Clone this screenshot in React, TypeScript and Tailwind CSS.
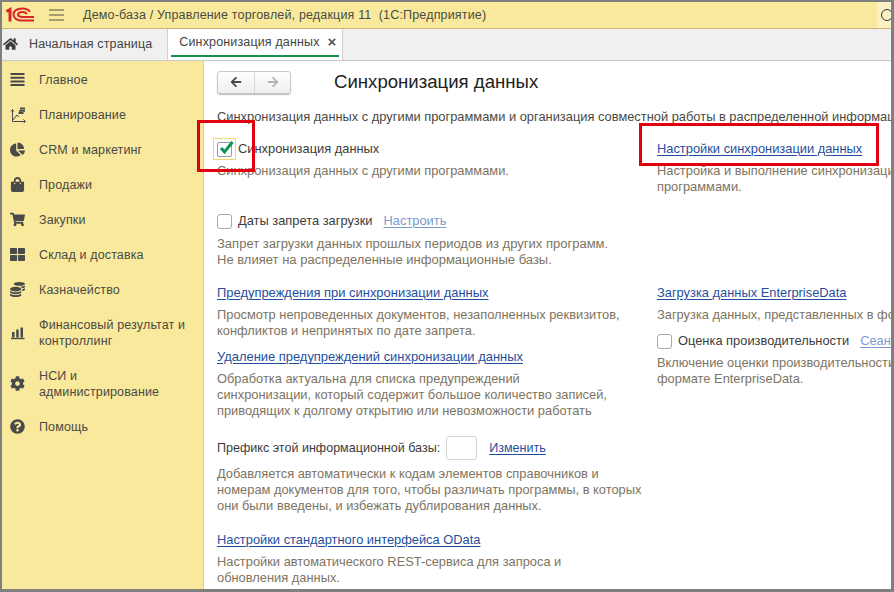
import React from "react";
import { FaHome, FaChartPie, FaShoppingBag, FaShoppingCart, FaThLarge, FaCoins, FaCog, FaQuestionCircle, FaArrowLeft, FaArrowRight } from "react-icons/fa";

const ic = "w-[15px] h-[15px] text-[#4a4a48]";

function Bars() {
  return (
    <svg viewBox="0 0 15 15" className={ic}>
      <path d="M0.5 2h14M0.5 5.7h14M0.5 9.4h14M0.5 13h14" stroke="currentColor" strokeWidth="2" />
    </svg>
  );
}
function Plan() {
  return (
    <svg viewBox="0 0 16 16" className="w-[16px] h-[16px] text-[#4a4a48]" fill="none" stroke="currentColor">
      <path d="M2.5 3v11.5H15M1 4.5l1.5-2 1.5 2M13.5 12.5l2 2-2 1.5M3 13l4-5 2 2" strokeWidth="1" />
      <path d="M8.5 6h5M9 3.8h6M10 1.5h5" strokeWidth="1.8" />
    </svg>
  );
}
function ChartBars() {
  return (
    <svg viewBox="0 0 15 15" className={ic}>
      <path d="M1 13.5h13.5" stroke="currentColor" strokeWidth="1.4" />
      <path d="M2 7h2.5v5.5H2zM6.2 4.5h2.5v8H6.2zM10.5 2.5H13v10h-2.5z" fill="currentColor" />
    </svg>
  );
}

const items: { icon: React.ReactNode; label: React.ReactNode; two?: boolean }[] = [
  { icon: <Bars />, label: "Главное" },
  { icon: <Plan />, label: "Планирование" },
  { icon: <FaChartPie className={ic} />, label: "CRM и маркетинг" },
  { icon: <FaShoppingBag className={ic} />, label: "Продажи" },
  { icon: <FaShoppingCart className={ic} />, label: "Закупки" },
  { icon: <FaThLarge className={ic} />, label: "Склад и доставка" },
  { icon: <FaCoins className={ic} />, label: "Казначейство" },
  { icon: <ChartBars />, label: "Финансовый результат и контроллинг", two: true },
  { icon: <FaCog className={ic} />, label: "НСИ и администрирование", two: true },
  { icon: <FaQuestionCircle className={ic} />, label: "Помощь" },
];

function Link({ children }: { children: React.ReactNode }) {
  return <a className="text-[#1f4f9c] underline underline-offset-2 decoration-1">{children}</a>;
}
function Hint({ className = "", children }: { className?: string; children: React.ReactNode }) {
  return <div className={"text-[#7d7462] " + className}>{children}</div>;
}
function Check() {
  return <span className="inline-block w-[15px] h-[15px] shrink-0 rounded-[3px] border border-[#a8a8a8] bg-white" />;
}

export default function App() {
  return (
    <div
      className="relative w-[894px] h-[592px] overflow-hidden flex flex-col bg-white border-t-2 border-l-2 border-r-[3px] border-b-[3px] border-[#7f7f7f] text-[12.87px] leading-[16px] text-[#3c3c3c]"
      style={{ fontFamily: '"Liberation Sans", Arial, sans-serif' }}
    >
      {/* title bar */}
      <div className="h-[27px] shrink-0 flex items-center bg-[#f9e99c] border-b border-[#c5b579] text-[12.5px]">
        <svg viewBox="0 0 30 16" className="ml-[3px] w-[30px] h-[16px]" fill="none" stroke="#d8262c">
          <path d="M1.5 4.5L5 2.5V14.5" strokeWidth="3" />
          <path d="M25 4.8C23.5 2.6 20.5 1.5 17 1.5C12 1.5 8.5 4 8.5 7.5S12 13.5 17 13.5H29" strokeWidth="2" />
          <path d="M22 7C21 5.6 19.5 5 17.5 5C15 5 13 6 13 7.6S15 10 17.5 10H29" strokeWidth="2" />
        </svg>
        <svg viewBox="0 0 15 12" className="ml-[14px] w-[15px] h-[12px]" stroke="#55524a">
          <path d="M0 1h15M0 6h15M0 11h15" strokeWidth="1" />
        </svg>
        <span className="ml-[19px] text-[#4a4a44] tracking-[0.17px]">Демо-база / Управление торговлей, редакция 11&nbsp; (1С:Предприятие)</span>
        <div className="ml-auto self-stretch w-[14px] bg-[#fbf1c4] flex items-center overflow-hidden">
          <svg viewBox="0 0 14 14" className="ml-[3px] w-[14px] h-[14px] shrink-0" fill="none" stroke="#333">
            <circle cx="7" cy="7" r="5.5" />
          </svg>
        </div>
      </div>

      {/* tabs */}
      <div className="h-[32px] shrink-0 flex items-stretch bg-[#f0f0f0] border-b border-[#c9c9c9] text-[12.5px]">
        <FaHome className="ml-[1px] mt-[8px] w-[15px] h-[14px] text-[#3f3f3f]" />
        <span className="ml-[11px] mt-[7px] text-[#444] tracking-[0.13px]">Начальная страница</span>
        <div className="ml-[15px] w-[176px] bg-white border-x border-[#cfcfcf] flex flex-col px-[3px]">
          <div className="flex-1 flex items-center pl-[8px] pr-[3px] justify-between text-[#444] tracking-[0.15px]">
            <span>Синхронизация данных</span>
            <span className="font-bold text-[15px] text-[#555]">×</span>
          </div>
          <div className="h-[2px] bg-[#149050] mb-[3px]" />
        </div>
      </div>

      <div className="flex-1 flex min-h-0">
        {/* sidebar */}
        <div className="w-[202px] shrink-0 pt-[1px] bg-[#f9e99c] border-r border-[#dccb86] text-[#4a4a44] text-[12.5px] tracking-[0.14px]">
          {items.map((it, i) => (
            <div key={i} className={"flex items-center " + (it.two ? "h-[51px]" : "h-[35px]")}>
              <span className="w-[37px] pl-[8px] shrink-0 flex">{it.icon}</span>
              <span className="w-[155px]">{it.label}</span>
            </div>
          ))}
        </div>

        {/* main */}
        <div className="flex-1 min-w-0 overflow-hidden pl-[13px] pt-[9px]">
          <div className="flex items-center h-[24px]">
            <div className="flex w-[74px] h-[23px] rounded-[3px] border border-[#c8c8c8] bg-gradient-to-b from-white to-[#eeeeee] shadow-[0_1px_1px_#bbb]">
              <div className="w-[37px] flex items-center justify-center border-r border-[#d8d8d8]">
                <FaArrowLeft className="w-[14px] h-[12px] text-[#4a4a4a]" />
              </div>
              <div className="flex-1 flex items-center justify-center">
                <FaArrowRight className="w-[14px] h-[12px] text-[#b4b4b4]" />
              </div>
            </div>
            <h1 className="ml-[43px] text-[18.6px] leading-[24px] text-[#222] whitespace-nowrap">Синхронизация данных</h1>
          </div>

          <div className="mt-[15px] whitespace-nowrap text-[#4a4a44]">
            Синхронизация данных с другими программами и организация совместной работы в распределенной информационной базе
          </div>

          <div className="mt-[16px] flex">
            {/* column 1 */}
            <div className="w-[440px] shrink-0">
              <div className="flex items-center h-[16px]">
                <span className="flex items-center justify-center w-[23px] h-[22px] -ml-[4px] mr-[2px] border border-[#eed96a] shrink-0">
                  <span className="relative w-[15px] h-[15px] rounded-[2px] border border-[#9a9a9a] bg-white">
                    <svg viewBox="0 0 16 16" className="absolute -top-[3px] left-[1px] w-[16px] h-[16px]" fill="none" stroke="#0f9457" strokeWidth="3">
                      <path d="M2 8l3.5 4L13.5 2" />
                    </svg>
                  </span>
                </span>
                <span className="whitespace-nowrap">Синхронизация данных</span>
              </div>
              <Hint className="mt-[6px]">Синхронизация данных с другими программами.</Hint>

              <div className="mt-[34px] flex items-center h-[16px]">
                <Check />
                <span className="ml-[6px]">Даты запрета загрузки</span>
                <span className="ml-[11px] text-[#7b9bd0] underline underline-offset-2 decoration-1">Настроить</span>
              </div>
              <Hint className="mt-[7px] text-[13.03px]">
                Запрет загрузки данных прошлых периодов из других программ.
                <br />
                Не влияет на распределенные информационные базы.
              </Hint>

              <div className="mt-[17px] text-[12.95px]"><Link>Предупреждения при синхронизации данных</Link></div>
              <Hint className="mt-[6px]">
                Просмотр непроведенных документов, незаполненных реквизитов,
                <br />
                конфликтов и непринятых по дате запрета.
              </Hint>

              <div className="mt-[10px] text-[12.93px]"><Link>Удаление предупреждений синхронизации данных</Link></div>
              <Hint className="mt-[6px]">
                Обработка актуальна для списка предупреждений
                <br />
                синхронизации, который содержит большое количество записей,
                <br />
                приводящих к долгому открытию или невозможности работать
              </Hint>

              <div className="mt-[17px] flex items-center h-[24px]">
                <span className="text-[12.55px]">Префикс этой информационной базы:</span>
                <span className="ml-[6px] w-[31px] h-[24px] rounded-[3px] border border-[#d4d4d4] bg-white" />
                <span className="ml-[12px] text-[12.55px]"><Link>Изменить</Link></span>
              </div>
              <Hint className="mt-[6px]">
                Добавляется автоматически к кодам элементов справочников и
                <br />
                номерам документов для того, чтобы различать программы, в которых
                <br />
                они были введены, и избежать дублирования данных.
              </Hint>

              <div className="mt-[18px]"><Link>Настройки стандартного интерфейса OData</Link></div>
              <Hint className="mt-[6px]">
                Настройки автоматического REST-сервиса для запроса и
                <br />
                обновления данных.
              </Hint>
            </div>

            {/* column 2 */}
            <div className="whitespace-nowrap">
              <div><Link>Настройки синхронизации данных</Link></div>
              <Hint className="mt-[6px]">
                Настройка и выполнение синхронизации данных с другими
                <br />
                программами.
              </Hint>
              <div className="mt-[90px]"><Link>Загрузка данных EnterpriseData</Link></div>
              <Hint className="mt-[6px]">Загрузка данных, представленных в формате EnterpriseData</Hint>
              <div className="mt-[10px] flex items-center h-[16px]">
                <Check />
                <span className="ml-[6px]">Оценка производительности</span>
                <span className="ml-[11px] text-[#7b9bd0] underline underline-offset-2 decoration-1">Сеансы</span>
              </div>
              <Hint className="mt-[6px]">
                Включение оценки производительности при синхронизации в
                <br />
                формате EnterpriseData.
              </Hint>
            </div>
          </div>
        </div>
      </div>

      {/* red annotations */}
      <div className="absolute left-[195px] top-[118px] w-[58px] h-[52px] border-[3px] border-[#e0000f]" />
      <div className="absolute left-[637px] top-[121px] w-[240px] h-[43px] border-[3px] border-[#e0000f]" />
    </div>
  );
}
